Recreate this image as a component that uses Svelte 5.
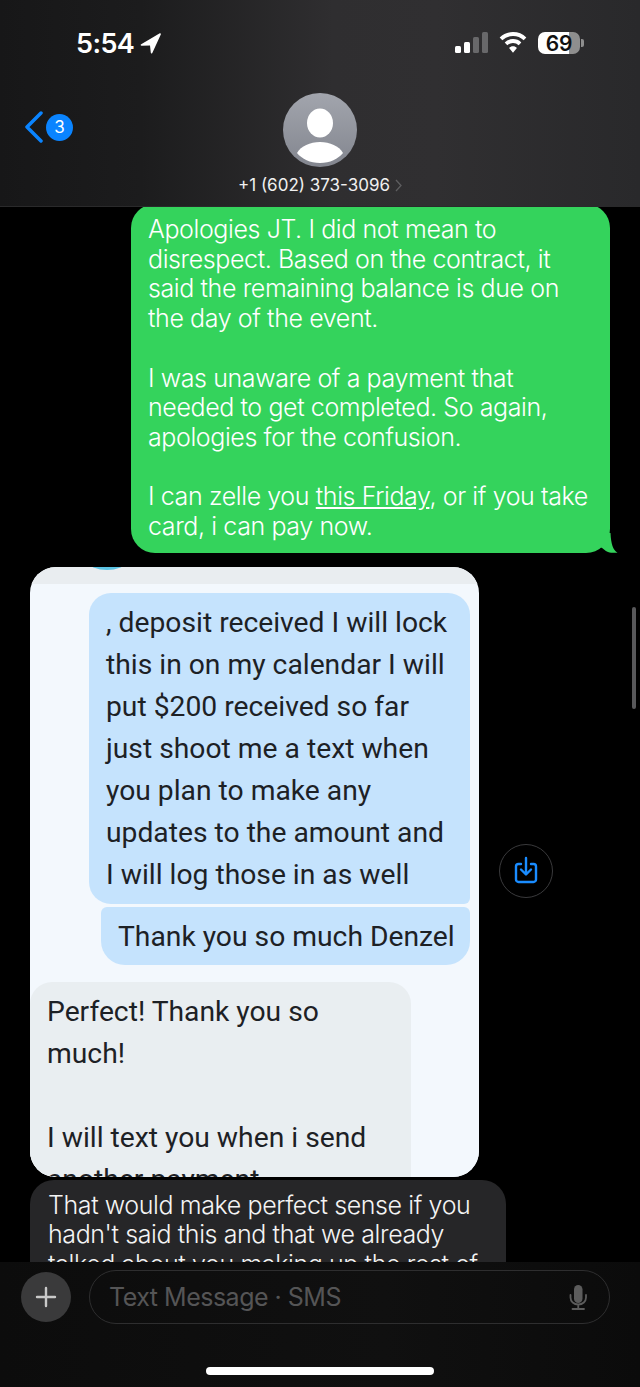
<script>
  const blueLines = [", deposit received I will lock", "this in on my calendar I will", "put $200 received so far", "just shoot me a text when", "you plan to make any", "updates to the amount and", "I will log those in as well"];
</script>

<div class="phone">
  <header class="top">
    <div class="status">
      <div class="clock">
        <span class="time">5:54</span>
        <svg class="loc" width="21" height="21" viewBox="0 0 21 21"><path d="M19.800.3 1.200 11.300c-.9.500-.6 1.500.4 1.500l8.400-.3.8 7.300c.1 1 1.100 1.100 1.500.2L20.800 1.400c.3-.8-.3-1.400-1-1.100z" fill="#fff"/></svg>
      </div>
      <div class="indicators">
        <svg width="33" height="21" viewBox="0 0 33 21">
          <rect x="0" y="14" width="6" height="7" rx="1.500" fill="#fff"/>
          <rect x="9" y="10" width="6" height="11" rx="1.500" fill="#fff"/>
          <rect x="18" y="5" width="6" height="16" rx="1.500" fill="#68686a"/>
          <rect x="27" y="0" width="6" height="21" rx="1.500" fill="#68686a"/>
        </svg>
        <svg class="wifi" width="28" height="21" viewBox="0 0 28 21" fill="none">
          <path d="M2 6.800C5.200 3.700 9.400 2 14 2s8.800 1.700 12 4.800" stroke="#fff" stroke-width="3.800"/>
          <path d="M7 11.800c1.900-1.800 4.300-2.800 7-2.800s5.100 1 7 2.800" stroke="#fff" stroke-width="3.800"/>
          <path d="M14 14.300c-1.500 0-2.900.6-3.900 1.600L14 20.800l3.900-4.900c-1-1-2.400-1.600-3.900-1.600z" fill="#fff"/>
        </svg>
        <div class="battery"><span>69</span></div>
        <i class="nub"></i>
      </div>
    </div>
    <div class="contact">
      <div class="back">
        <svg width="18" height="32" viewBox="0 0 18 32"><path d="M16 2 2 16l14 14" fill="none" stroke="#0a84ff" stroke-width="3.500" stroke-linecap="round" stroke-linejoin="round"/></svg>
        <span class="badge">3</span>
      </div>
      <div class="avatar">
        <svg width="74" height="74" viewBox="0 0 74 74">
          <ellipse cx="37" cy="30" rx="13" ry="14.500" fill="#fff"/>
          <path d="M14 60c4-7 13-11 23-11s19 4 23 11c-5 6-13 10-23 10s-18-4-23-10z" fill="#fff"/>
        </svg>
      </div>
      <div class="number">+1 (602) 373-3096
        <svg width="7" height="13" viewBox="0 0 7 13"><path d="m1 1 5 5.500L1 12" fill="none" stroke="#5e5e60" stroke-width="1.300"/></svg>
      </div>
    </div>
  </header>

  <main class="thread">
    <div class="green">
      <p>Apologies JT. I did not mean to disrespect. Based on the contract, it said the remaining balance is due on the day of the event.</p>
      <p>I was unaware of a payment that needed to get completed. So again, apologies for the confusion.</p>
      <p>I can zelle you <u>this Friday</u>, or if you take card, i can pay now.</p>
      <svg class="tail" width="18" height="20" viewBox="0 0 18 20"><path d="M0 14C3 15 5 18 8 19c3 1 7 1 9.500.7C13 17 11 11 10.500 0H0z" fill="#34d35c"/></svg>
    </div>

    <div class="shared">
      <div class="card">
        <div class="strip"><i></i></div>
        <div class="sheet">
          <div class="blue first">
            {#each blueLines as line}<div>{line}</div>{/each}
          </div>
          <div class="blue second">Thank you so much Denzel</div>
          <div class="grey">
            <div>Perfect! Thank you so</div>
            <div>much!</div>
            <div>&nbsp;</div>
            <div>I will text you when i send</div>
            <div>another payment</div>
          </div>
        </div>
      </div>
      <div class="save">
        <svg width="26" height="30" viewBox="0 0 26 30" fill="none" stroke="#1a8cff" stroke-width="2.400" stroke-linecap="round" stroke-linejoin="round">
          <path d="M8 8H5.500A2.500 2.500 0 0 0 3 10.500v13A2.500 2.500 0 0 0 5.500 26h15a2.500 2.500 0 0 0 2.500-2.500v-13A2.500 2.500 0 0 0 20.500 8H18"/>
          <path d="M13 2v16M8 13.500l5 5 5-5"/>
        </svg>
      </div>
    </div>

    <div class="dark">
      That would make perfect sense if you hadn't said this and that we already talked about you making up the rest of the payment before the day of the event.
    </div>
    <i class="scroll"></i>
  </main>

  <footer class="composer">
    <div class="bar">
      <button class="plus" aria-label="Add">
        <svg width="22" height="22" viewBox="0 0 22 22"><path d="M11 2v18M2 11h18" stroke="#c9c9c9" stroke-width="2.400" stroke-linecap="round"/></svg>
      </button>
      <div class="field">
        <span>Text Message · SMS</span>
        <svg width="18" height="25" viewBox="0 0 18 25" fill="none">
          <rect x="5" y="0" width="8.500" height="18" rx="4.250" fill="#5c5c5c"/>
          <path d="M1.500 10v2.500c0 4 3.300 7 7.750 7S17 16.500 17 12.500V10M9.250 19.500v4M3.500 24h11.500" stroke="#5c5c5c" stroke-width="1.800" stroke-linecap="round"/>
        </svg>
      </div>
    </div>
    <div class="home"></div>
  </footer>
</div>

<style>
  :global(body) { margin: 0; background: #000; }
  .phone {
    width: 640px; height: 1387px; display: flex; flex-direction: column; overflow: hidden;
    background: #000; font-family: Inter, "Liberation Sans", sans-serif; color: #fff;
  }
  .top {
    height: 207px; flex: none; box-sizing: border-box;
    background: linear-gradient(90deg, #171718 0%, #1c1c1d 22%, #2f2e30 52%, #302f31 68%, #29292b 100%);
    border-bottom: 1px solid #2a2a2b;
  }
  .status { display: flex; justify-content: space-between; padding: 32px 56px 0 76px; height: 61px; box-sizing: border-box; }
  .clock { display: flex; align-items: flex-start; gap: 6px; }
  .loc { margin-top: 1px; }
  .time { font-size: 27px; line-height: 22px; font-weight: 600; letter-spacing: -0.6px; margin-top: 1px; }
  .indicators { display: flex; align-items: flex-start; }
  .wifi { margin-left: 11px; }
  .battery {
    width: 42px; height: 22px; margin-left: 11px; border-radius: 7px;
    background: linear-gradient(90deg, #fff 0 73%, #8e8e8e 73%);
    display: flex; align-items: center; justify-content: center;
    color: #111; font-size: 21px; font-weight: 600; letter-spacing: -0.3px;
  }
  .nub { width: 3px; height: 8px; margin: 7px 0 0 1px; background: #8e8e8e; border-radius: 0 2px 2px 0; }
  .contact { position: relative; display: flex; flex-direction: column; align-items: center; }
  .back { position: absolute; left: 25px; top: 50px; display: flex; align-items: center; gap: 3px; }
  .badge {
    width: 27px; height: 27px; border-radius: 50%; background: #0a84ff;
    display: flex; align-items: center; justify-content: center; font-size: 17px;
  }
  .avatar {
    width: 74px; height: 74px; border-radius: 50%; margin-top: 32px; overflow: hidden;
    background: linear-gradient(#a2a5ad, #83868f);
  }
  .number {
    display: flex; align-items: center; gap: 5px; margin-top: 8px; font-size: 17px; line-height: 20px;
    color: #f0f0f0;
  }

  .thread { position: relative; flex: 1; min-height: 0; overflow: hidden; }
  .green {
    position: relative; box-sizing: border-box; width: 479px; margin: -3px 0 0 131px; padding: 11px 16px 11px 17px;
    background: #34d35c; border-radius: 24px; font-size: 25px; line-height: 29.700px; letter-spacing: -0.4px; color: #fff; font-weight: 350;
  }
  .green p { margin: 0 0 29.700px; }
  .green p:last-of-type { margin: 0; }
  .tail { position: absolute; right: -8px; bottom: 0; }

  .shared { display: flex; align-items: center; gap: 20px; margin: 14px 0 0 30px; }
  .card {
    width: 449px; height: 610px; border-radius: 26px; overflow: hidden; background: #f3f8fd;
    color: #1d2125; font-family: Roboto, Inter, sans-serif; font-size: 28.250px; line-height: 42px;
  }
  .strip { height: 17px; background: #e9edf0; position: relative; overflow: hidden; }
  .strip i { position: absolute; left: 59px; top: -12px; width: 36px; height: 15px; border-radius: 50%; background: #5cc4e4; }
  .sheet { background: #f3f8fd; border-radius: 18px 18px 0 0; margin-top: -1px; padding-top: 10px; }
  .blue { background: #c5e3fd; margin-left: auto; margin-right: 9px; box-sizing: border-box; }
  .first { width: 381px; height: 311px; padding: 9px 10px 0 17px; border-radius: 22px 22px 6px 22px; }
  .second { width: 369px; height: 58px; margin-top: 3px; padding: 9px 0 0 17px; border-radius: 6px 6px 24px 24px; white-space: nowrap; }
  .grey {
    width: 381px; height: 260px; margin-top: 17px; box-sizing: border-box; padding: 9px 0 0 17px;
    background: #e9eef1; border-radius: 22px 22px 0 0;
  }

  .save {
    width: 52px; height: 52px; border-radius: 50%; border: 1px solid #3a3a3c; flex: none; margin-bottom: 2px;
    display: flex; align-items: center; justify-content: center;
  }
  .dark {
    box-sizing: border-box; width: 476px; margin: 3px 0 0 30px; padding: 11px 20px 30px 18px;
    background: #262628; border-radius: 24px; font-size: 25px; line-height: 29.700px; letter-spacing: -0.4px; font-weight: 350; color: #f4f4f4;
  }
  .scroll { position: absolute; left: 632px; top: 400px; width: 4px; height: 102px; border-radius: 2px; background: #58585a; }

  .composer {
    height: 125px; flex: none; box-sizing: border-box; position: relative;
    background: linear-gradient(90deg, #0c0c0c, #101010 60%, #0b0b0b);
    padding-top: 8px;
  }
  .bar { display: flex; align-items: center; padding: 0 30px 0 21px; gap: 18px; }
  .plus {
    width: 50px; height: 50px; flex: none; padding: 0; border: 0; border-radius: 50%; background: #3a3a3b;
    display: flex; align-items: center; justify-content: center;
  }
  .field {
    flex: 1; height: 54px; box-sizing: border-box; border: 1px solid #2e2e2f; border-radius: 27px;
    display: flex; align-items: center; justify-content: space-between; padding: 0 22px 0 19px;
    color: #555556; font-size: 25px; letter-spacing: -0.5px;
  }
  .home { position: absolute; left: 206px; bottom: 12px; width: 228px; height: 8px; border-radius: 4px; background: #fff; }
</style>
